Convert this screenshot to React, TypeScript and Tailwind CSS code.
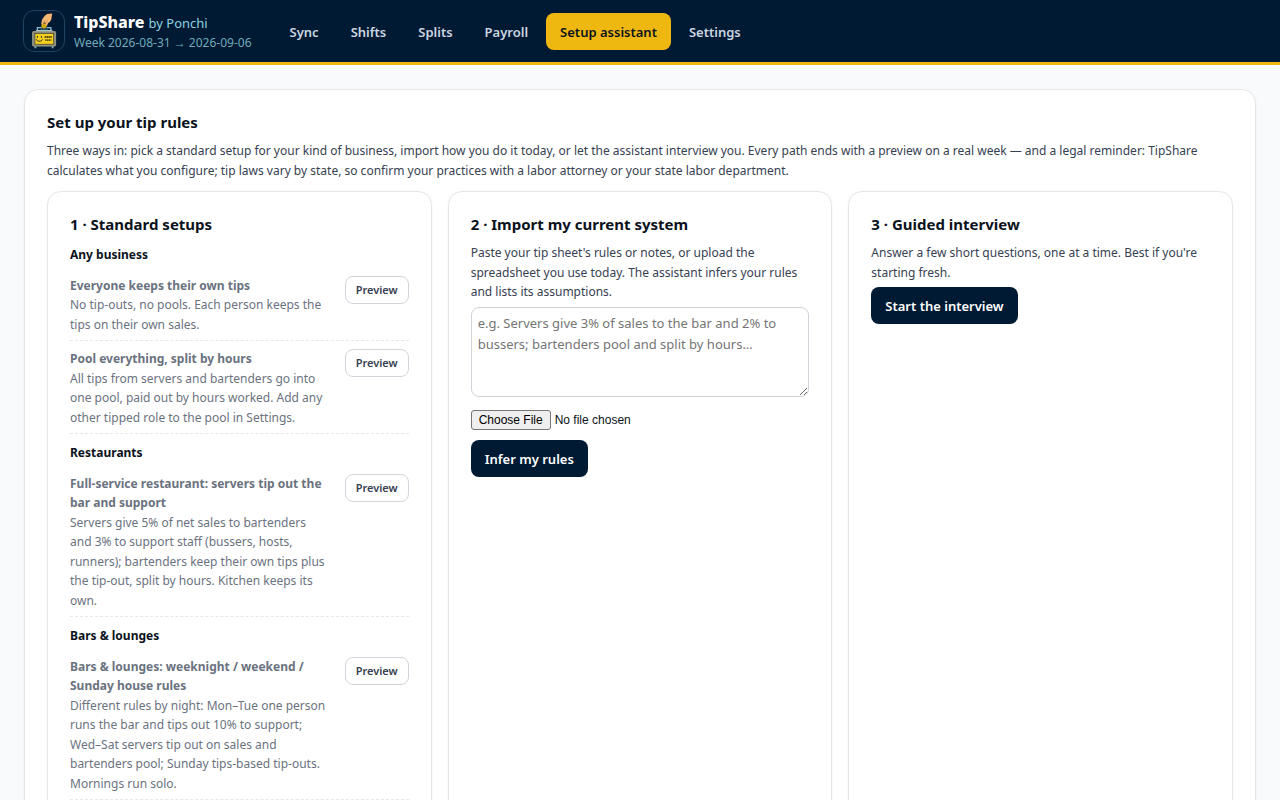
const NAV = ["Sync", "Shifts", "Splits", "Payroll", "Setup assistant", "Settings"];

const GROUPS = [
  {
    title: "Any business",
    items: [
      {
        name: "Everyone keeps their own tips",
        text: "No tip-outs, no pools. Each person keeps the tips on their own sales.",
      },
      {
        name: "Pool everything, split by hours",
        text: "All tips from servers and bartenders go into one pool, paid out by hours worked. Add any other tipped role to the pool in Settings.",
      },
    ],
  },
  {
    title: "Restaurants",
    items: [
      {
        name: "Full-service restaurant: servers tip out the bar and support",
        text: "Servers give 5% of net sales to bartenders and 3% to support staff (bussers, hosts, runners); bartenders keep their own tips plus the tip-out, split by hours. Kitchen keeps its own.",
      },
    ],
  },
  {
    title: "Bars & lounges",
    items: [
      {
        name: "Bars & lounges: weeknight / weekend / Sunday house rules",
        text: "Different rules by night: Mon–Tue one person runs the bar and tips out 10% to support; Wed–Sat servers tip out on sales and bartenders pool; Sunday tips-based tip-outs. Mornings run solo.",
      },
    ],
  },
];

const PANEL = "rounded-[14px] border border-[#e5e7eb] bg-white p-[22px] shadow-[0_1px_3px_rgba(0,26,51,0.05)]";
const HEADING = "text-[15px] leading-5 font-bold text-[#0b1220]";
const INTRO = "mt-[9px] text-xs leading-relaxed text-[#374151]";
const PRIMARY =
  "rounded-lg bg-[#001a33] px-3.5 pt-2 pb-1.5 text-[13px] leading-[23px] font-semibold text-white";

function Logo() {
  return (
    <svg viewBox="0 0 42 42" className="size-[42px] shrink-0" aria-hidden="true">
      <rect x="0.5" y="0.5" width="41" height="41" rx="10.5" fill="#001a33" stroke="#1f4260" />
      <path d="M14.4 20.4v-2.8h5M27.8 20.4v-2.8h-4.4" fill="none" stroke="#86bdcc" strokeWidth="1.4" />
      <path d="M17.4 18.4h7.6v1.6h-7.6z" fill="#24506a" />
      <circle cx="21" cy="15.8" r="2.6" fill="#e8c01a" stroke="#755f10" strokeWidth="0.6" />
      <path d="M21 14.4v2.8" stroke="#755f10" strokeWidth="0.7" />
      <path d="M24 3.9 29.2 3.4 28.4 9 27.2 11.6 25 13.2 24.2 15.6 22.9 15.4 22.6 13 20.9 12.2 19.4 14.8 18.2 13.6 19.2 9.2 21.6 6Z" fill="#f5b873" />
      <path d="M22.2 9.4 21 12.2M24.8 9.8 23 13" stroke="#b0703c" strokeWidth="0.5" />
      <path d="M13 20h16.4v1.4H13z" fill="#9cc3cc" />
      <rect x="9.6" y="21.5" width="23" height="14.6" rx="0.8" fill="#8a8a78" stroke="#aaa88f" strokeWidth="0.8" />
      <rect x="12" y="23.6" width="18.6" height="10.6" fill="#f5d01a" stroke="#34352a" strokeWidth="0.6" />
      <path d="M14.4 26v1.8M18.4 26v1.8M13.4 29.4c.9 2.5 5.2 2.5 6.1 0" fill="none" stroke="#222a28" strokeWidth="1" />
      <path d="M21.6 27H29M22.2 30.2h6.2" stroke="#5a4e10" strokeWidth="1.8" strokeDasharray="1.5 .4" />
      <path d="M11.4 36.3h2v1.9h-2zM28.6 36.3h2v1.9h-2z" fill="#85a6ac" />
    </svg>
  );
}

export default function App() {
  return (
    <div className="min-h-screen bg-[#f8fafc] font-['Noto_Sans',sans-serif] text-[#0b1220]">
      <header className="flex items-center border-b-3 border-[#efb810] bg-[#001a33] px-[23px] py-2.5">
        <div className="flex items-center gap-[9px]">
          <Logo />
          <div className="pt-px">
            <div className="flex h-[22px] items-baseline gap-1">
              <span className="text-base leading-[22px] font-extrabold text-white">TipShare</span>
              <span className="text-[13px] leading-5 text-[#8fd0e0]">by Ponchi</span>
            </div>
            <div className="text-xs leading-[19px] text-[#6fa9b9]">Week 2026-08-31 → 2026-09-06</div>
          </div>
        </div>
        <nav className="ml-6 flex gap-1">
          {NAV.map((label) => (
            <a
              key={label}
              href="#"
              aria-current={label === "Setup assistant" ? "page" : undefined}
              className="rounded-lg px-3.5 pt-2 pb-1.5 text-[13px] leading-[23px] font-semibold text-[#cbd5e1] aria-[current=page]:bg-[#efb810] aria-[current=page]:text-[#0b1220]"
            >
              {label}
            </a>
          ))}
        </nav>
      </header>

      <main className="p-6">
        <section className={PANEL}>
          <h1 className={HEADING}>Set up your tip rules</h1>
          <p className={INTRO}>
            Three ways in: pick a standard setup for your kind of business, import how you do it today, or let the
            assistant interview you. Every path ends with a preview on a real week — and a legal reminder: TipShare
            calculates what you configure; tip laws vary by state, so confirm your practices with a labor attorney or
            your state labor department.
          </p>

          <div className="mt-[11px] grid grid-cols-3 gap-4">
            <section className={PANEL}>
              <h2 className={`mb-0.5 ${HEADING}`}>1 · Standard setups</h2>
              {GROUPS.map((group) => (
                <div key={group.title} className="pt-[9px]">
                  <h3 className="mb-[3px] text-xs leading-relaxed font-bold">{group.title}</h3>
                  {group.items.map((item) => (
                    <div
                      key={item.name}
                      className="flex items-start justify-between gap-4 border-b border-dashed border-[#e5e7eb] pt-2 pb-1.5"
                    >
                      <div className="text-xs leading-relaxed text-[#6b7280]">
                        <strong className="block font-bold">{item.name}</strong>
                        {item.text}
                      </div>
                      <button
                        type="button"
                        className="shrink-0 rounded-lg border border-[#d1d5db] bg-white px-2.5 py-1 text-[11px] leading-[18px] font-semibold text-[#374151]"
                      >
                        Preview
                      </button>
                    </div>
                  ))}
                </div>
              ))}
            </section>

            <section className={PANEL}>
              <h2 className={HEADING}>2 · Import my current system</h2>
              <p className={INTRO}>
                Paste your tip sheet's rules or notes, or upload the spreadsheet you use today. The assistant infers
                your rules and lists its assumptions.
              </p>
              <textarea
                aria-label="Your current tip rules"
                rows={4}
                placeholder="e.g. Servers give 3% of sales to the bar and 2% to bussers; bartenders pool and split by hours..."
                className="mt-[5px] block h-[90px] w-full rounded-lg border border-[#d1d5db] px-1.5 py-[5px] text-[13px] leading-[21px] placeholder:text-[#757575]"
              />
              <input
                type="file"
                aria-label="Upload your spreadsheet"
                className="mt-[13px] block w-full font-['Liberation_Sans',sans-serif] text-xs file:mr-1 file:rounded-[3px] file:border file:border-[#767676] file:bg-[#efefef] file:px-[7px] file:leading-[18px] file:text-black"
              />
              <button type="button" className={`mt-2.5 ${PRIMARY}`}>
                Infer my rules
              </button>
            </section>

            <section className={PANEL}>
              <h2 className={HEADING}>3 · Guided interview</h2>
              <p className={INTRO}>
                Answer a few short questions, one at a time. Best if you're starting fresh.
              </p>
              <button type="button" className={`mt-[5px] ${PRIMARY}`}>
                Start the interview
              </button>
            </section>
          </div>
        </section>
      </main>
    </div>
  );
}
